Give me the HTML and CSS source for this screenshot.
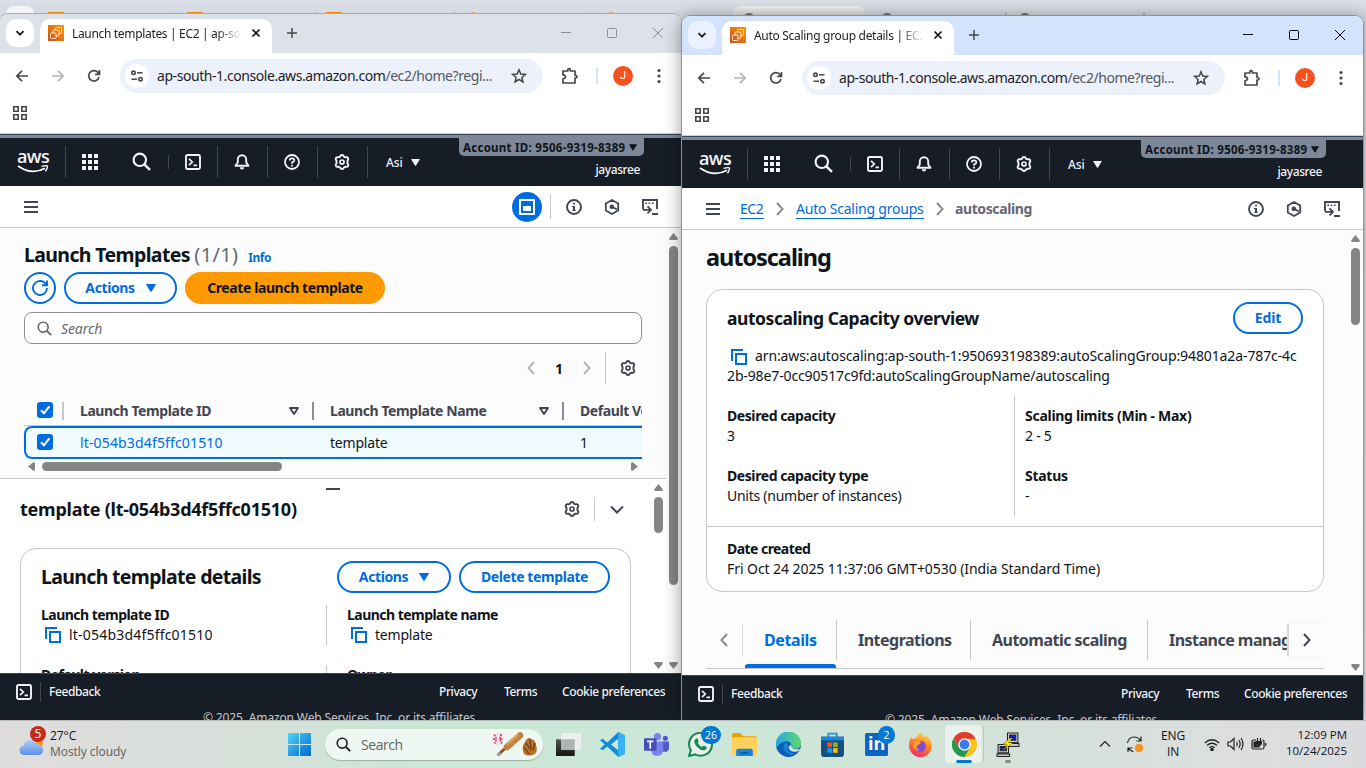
FILE: index.html
```html
<!DOCTYPE html>
<html lang="en">
<head>
<meta charset="utf-8">
<title>Desktop</title>
<link rel="stylesheet" href="styles.css">
</head>
<body>
<svg class="defs" aria-hidden="true">
  <symbol id="down" viewBox="0 0 10 10"><path d="M1.500 3.200 5 6.700 8.500 3.200" fill="none" stroke="currentColor" stroke-width="1.900"/></symbol>
  <symbol id="ec2" viewBox="0 0 16 16"><defs><linearGradient id="og" x1="0" y1="1" x2="1" y2="0"><stop offset="0" stop-color="#c8511b"/><stop offset="1" stop-color="#f90"/></linearGradient></defs><rect width="16" height="16" fill="url(#og)"/><g fill="none" stroke="#fff" stroke-width=".9" opacity=".9"><rect x="2.500" y="8" width="5.500" height="5.500" rx=".8"/><path d="M5 8V5.800q0-.8.8-.8h4.400q.8 0 .8.8v4.400q0 .8-.8.8H8M7.500 5V3.300q0-.8.8-.8h4.400q.8 0 .8.8v4.400q0 .8-.8.8H11"/></g></symbol>
  <symbol id="x" viewBox="0 0 10 10"><path d="m1.500 1.500 7 7m0-7-7 7" fill="none" stroke="currentColor" stroke-width="1.700"/></symbol>
  <symbol id="plus" viewBox="0 0 10 10"><path d="M5 0v10M0 5h10" stroke="currentColor" stroke-width="1.500"/></symbol>
  <symbol id="min" viewBox="0 0 12 12"><path d="M1 5.500h10" stroke="currentColor"/></symbol>
  <symbol id="max" viewBox="0 0 12 12"><rect x="1.500" y="1.500" width="9" height="9" rx="1" fill="none" stroke="currentColor"/></symbol>
  <symbol id="close" viewBox="0 0 12 12"><path d="m1 1 10 10M11 1 1 11" stroke="currentColor"/></symbol>
  <symbol id="back" viewBox="0 0 16 16"><path d="M14 8H3M8 2.800 2.800 8 8 13.200" fill="none" stroke="currentColor" stroke-width="1.700"/></symbol>
  <symbol id="reload" viewBox="0 0 16 16"><path d="M13 9a5.200 5.200 0 1 1-1.300-4.800L13.300 6M13.500 2v4.300H9.200" fill="none" stroke="currentColor" stroke-width="1.700"/></symbol>
  <symbol id="tune" viewBox="0 0 14 14"><g fill="none" stroke="currentColor" stroke-width="1.600"><circle cx="3.500" cy="3.800" r="1.700"/><path d="M7 3.800h5.500M1.500 10.200h5.500"/><circle cx="10.500" cy="10.200" r="1.700"/></g></symbol>
  <symbol id="star" viewBox="0 0 16 16"><path d="m8 1.800 1.750 4.300 4.600.35-3.500 3 1.100 4.500L8 11.500l-3.950 2.450 1.100-4.500-3.500-3 4.600-.35z" fill="none" stroke="currentColor" stroke-width="1.500"/></symbol>
  <symbol id="puzzle" viewBox="0 0 18 18"><path d="M2 4h4.800V3a1.300 1.300 0 0 1 2.600 0v1H14v4.500h1a1.300 1.300 0 0 1 0 2.500h-1v5H2v-4.200q2.500-.4 2.500-2T2 7.900z" fill="none" stroke="currentColor" stroke-width="1.700" stroke-linejoin="round"/></symbol>
  <symbol id="dots" viewBox="0 0 4 16"><circle cx="2" cy="2.500" r="1.600"/><circle cx="2" cy="8" r="1.600"/><circle cx="2" cy="13.500" r="1.600"/></symbol>
  <symbol id="apps" viewBox="0 0 14 14"><g fill="none" stroke="currentColor" stroke-width="1.600"><path d="M.8.800h4.400v4.400H.8zM8.800.800h4.400v4.400H8.800zM.8 8.800h4.400v4.400H.8zM8.800 8.800h4.400v4.400H8.800z"/></g></symbol>
  <symbol id="smile" viewBox="0 0 32 8"><path d="M1 1q14 9.500 27 2.200" fill="none" stroke="#fff" stroke-width="1.800"/><path d="M24.500 1.400q6-1.500 6 0t-2 5" fill="none" stroke="#fff" stroke-width="1.300"/></symbol>
  <symbol id="grid" viewBox="0 0 16 16"><path d="M0 0h4v4H0zM6 0h4v4H6zM12 0h4v4h-4zM0 6h4v4H0zM6 6h4v4H6zM12 6h4v4h-4zM0 12h4v4H0zM6 12h4v4H6zM12 12h4v4h-4z" fill="currentColor"/></symbol>
  <symbol id="search" viewBox="0 0 18 18"><circle cx="7.400" cy="7.400" r="5.900" fill="none" stroke="currentColor" stroke-width="2"/><path d="m11.700 11.700 5.300 5.300" stroke="currentColor" stroke-width="2.300"/></symbol>
  <symbol id="term" viewBox="0 0 16 16"><rect x="1" y="1" width="14" height="14" rx="1.500" fill="none" stroke="currentColor" stroke-width="1.900"/><path d="m4 4.800 3.300 3.200L4 11.200M8.500 11.300H12" fill="none" stroke="currentColor" stroke-width="1.700"/></symbol>
  <symbol id="bell" viewBox="0 0 16 16"><path d="M8 1.200a4.200 4.200 0 0 0-4.200 4.200v3L1.500 11.700h13l-2.300-3.300v-3A4.200 4.200 0 0 0 8 1.200z" fill="none" stroke="currentColor" stroke-width="1.900" stroke-linejoin="round"/><path d="M5.800 13.300q0 2.200 2.200 2.200t2.200-2.200" fill="currentColor"/></symbol>
  <symbol id="help" viewBox="0 0 16 16"><circle cx="8" cy="8" r="7" fill="none" stroke="currentColor" stroke-width="1.800"/><path d="M5.700 6.400q0-2 2.300-2t2.300 1.900Q10.300 8 8 8.300v1.400" fill="none" stroke="currentColor" stroke-width="1.600"/><path d="M7.100 10.700h1.800v1.700H7.100z" fill="currentColor"/></symbol>
  <symbol id="gear" viewBox="0 0 16 16"><path d="M6.100 2.600Q6.500 1 8 1t1.900 1.600q1 .6 1.600.8 1.800-.6 2.600.7.700 1.300-.6 2.500v2.800q1.300 1.200.6 2.500-.8 1.300-2.600.7-.6.400-1.600.9Q9.500 15 8 15t-1.900-1.500q-1-.5-1.600-.9-1.800.6-2.600-.7-.7-1.300.6-2.500V6.600Q1.200 5.400 1.900 4.100q.8-1.300 2.600-.7.600-.2 1.600-.8z" fill="none" stroke="currentColor" stroke-width="1.900" stroke-linejoin="round"/><circle cx="8" cy="8" r="2" fill="none" stroke="currentColor" stroke-width="1.700"/></symbol>
  <symbol id="tri" viewBox="0 0 10 8"><path d="M.5 0h9q.7 0 .3.700L5.600 7.500q-.6.800-1.200 0L.2.700Q-.2 0 .5 0z" fill="currentColor"/></symbol>
  <symbol id="trio" viewBox="0 0 10 8"><path d="M1 1h8L5 7z" fill="none" stroke="currentColor" stroke-width="1.900" stroke-linejoin="round"/></symbol>
  <symbol id="ham" viewBox="0 0 14 12"><path d="M0 1h14M0 6h14M0 11h14" stroke="currentColor" stroke-width="2"/></symbol>
  <symbol id="info" viewBox="0 0 16 16"><circle cx="8" cy="8" r="7" fill="none" stroke="currentColor" stroke-width="1.900"/><path d="M7.100 3.800h1.900v1.800H7.100zM6 7h3v4.200h1V12H6v-.8h1V8H6z" fill="currentColor"/></symbol>
  <symbol id="hex" viewBox="0 0 16 16"><path d="m8 1 6.200 3.500v7L8 15l-6.200-3.500v-7z" fill="none" stroke="currentColor" stroke-width="1.800" stroke-linejoin="round"/><circle cx="7.800" cy="7.800" r="2.300" fill="currentColor"/><path d="m8 7.800 5 2.600" stroke="currentColor" stroke-width="1.700"/></symbol>
  <symbol id="share" viewBox="0 0 16 16"><path d="M1 10V1h14v9" fill="none" stroke="currentColor" stroke-width="1.900"/><path d="M3.300 4.200H5m1.600 0h1.700m1.600 0h1.700" stroke="currentColor" stroke-width="1.600"/><path d="M.8 10.800H8M5.500 7.300 9 10.800l-3.500 3.500M10 15h6" fill="none" stroke="currentColor" stroke-width="1.800"/></symbol>
  <symbol id="refresh" viewBox="0 0 16 16"><path d="M15 8a7 7 0 1 1-2.500-5.400L15 5M15 .5V5.200h-5" fill="none" stroke="currentColor" stroke-width="1.900"/></symbol>
  <symbol id="copy" viewBox="0 0 16 16"><path d="M1 12V1h11M5 5h10v10H5z" fill="none" stroke="currentColor" stroke-width="2"/></symbol>
  <symbol id="left" viewBox="0 0 8 14"><path d="M7 1 1.500 7 7 13" fill="none" stroke="currentColor" stroke-width="2"/></symbol>
  <symbol id="right" viewBox="0 0 8 14"><path d="m1 1 5.500 6L1 13" fill="none" stroke="currentColor" stroke-width="2"/></symbol>
  <symbol id="chev" viewBox="0 0 14 9"><path d="m1 1.500 6 6 6-6" fill="none" stroke="currentColor" stroke-width="2"/></symbol>
</svg>

<main class="desktop">
  <div class="behind">
    <i class="b-pill"></i><i class="b-ico b1"></i><i class="b-sep b2"></i><i class="b-ico b3"></i><i class="b-sep b4"></i><i class="b-ico b5"></i><i class="b-sep b6"></i><i class="b-dot b7"></i><i class="b-sep b8"></i><i class="b-dot b9"></i>
    <i class="b-tab"></i><i class="b-globe g1"></i><i class="b-globe g2"></i><i class="b-globe g3"></i><i class="b-sep g4"></i><i class="b-sep g5"></i>
  </div>

  <section class="window left-win">
    <div class="tabstrip">
      <span class="tabsearch"><svg><use href="#down"/></svg></span>
      <div class="tab"><svg class="fav"><use href="#ec2"/></svg><span class="tabtitle t1">Launch templates | EC2 | ap-sou</span><svg class="tx"><use href="#x"/></svg></div>
      <svg class="newtab"><use href="#plus"/></svg>
      <div class="controls"><svg><use href="#min"/></svg><svg><use href="#max"/></svg><svg><use href="#close"/></svg></div>
    </div>
    <div class="toolbar">
      <svg class="tb"><use href="#back"/></svg><svg class="tb fwd"><use href="#back"/></svg><svg class="tb"><use href="#reload"/></svg>
      <div class="url"><span class="site"><svg><use href="#tune"/></svg></span><span class="addr">ap-south-1.console.aws.amazon.com<em>/ec2/home?regi...</em></span><svg class="star"><use href="#star"/></svg></div>
      <svg class="puz"><use href="#puzzle"/></svg><i class="tsep"></i><span class="avatar">J</span><svg class="dots"><use href="#dots"/></svg>
    </div>
    <div class="bookmarks"><svg><use href="#apps"/></svg></div>
    <div class="band"></div>
    <nav class="aws">
      <div class="logo"><span>aws</span><svg><use href="#smile"/></svg></div>
      <div class="n n-grid"><svg><use href="#grid"/></svg></div>
      <div class="n n-search"><svg class="i18"><use href="#search"/></svg></div>
      <div class="n n-term"><svg><use href="#term"/></svg></div>
      <div class="n"><svg><use href="#bell"/></svg></div>
      <div class="n"><svg><use href="#help"/></svg></div>
      <div class="n"><svg><use href="#gear"/></svg></div>
      <div class="region"><span>Asi</span><svg><use href="#tri"/></svg></div>
      <div class="account"><div class="acct"><span>Account ID: 9506-9319-8389</span><svg><use href="#tri"/></svg></div><span class="user">jayasree</span></div>
    </nav>
    <div class="crumbs">
      <svg class="ham"><use href="#ham"/></svg>
      <div class="tools"><span class="panelbtn"><i></i></span><i class="csep"></i><svg><use href="#info"/></svg><svg><use href="#hex"/></svg><svg><use href="#share"/></svg></div>
    </div>
    <div class="body">
      <div class="col">
        <div class="list">
          <h1 class="lt">Launch Templates <span>(1/1)</span><a>Info</a></h1>
          <div class="actions"><button class="btn round"><svg><use href="#refresh"/></svg></button><button class="btn act">Actions<svg><use href="#tri"/></svg></button><button class="btn primary">Create launch template</button></div>
          <div class="find"><svg><use href="#search"/></svg><span>Search</span></div>
          <div class="pager"><svg><use href="#left"/></svg><b>1</b><svg><use href="#right"/></svg><i></i><svg class="pg"><use href="#gear"/></svg></div>
          <div class="table">
            <div class="tr th"><div class="c0"><i class="cb"><svg viewBox="0 0 16 16"><path d="m4 8.300 3 3 5.300-7"/></svg></i></div><div class="c1">Launch Template ID<svg><use href="#trio"/></svg></div><div class="c1">Launch Template Name<svg><use href="#trio"/></svg></div><div class="c3">Default Version</div></div>
            <div class="tr sel"><div class="c0"><i class="cb"><svg viewBox="0 0 16 16"><path d="m4 8.300 3 3 5.300-7"/></svg></i></div><div class="c1 link">lt-054b3d4f5ffc01510</div><div class="c1">template</div><div class="c3">1</div></div>
          </div>
          <div class="hbar"><i class="al"></i><i class="thumb"></i><i class="ar"></i></div>
        </div>
        <div class="split">
          <div class="splitmain">
            <i class="handle"></i>
            <div class="sphead"><h2>template (lt-054b3d4f5ffc01510)</h2><svg class="g"><use href="#gear"/></svg><i></i><svg class="ch"><use href="#chev"/></svg></div>
            <div class="card detail">
              <div class="cardhead"><h2>Launch template details</h2><button class="btn act">Actions<svg><use href="#tri"/></svg></button><button class="btn del">Delete template</button></div>
              <div class="kv"><div><b>Launch template ID</b><span class="cp id"><svg><use href="#copy"/></svg>lt-054b3d4f5ffc01510</span></div><div><b>Launch template name</b><span class="cp"><svg><use href="#copy"/></svg>template</span></div></div>
              <div class="kv"><div><b>Default version</b><span>1</span></div><div><b>Owner</b><span>-</span></div></div>
            </div>
          </div>
          <div class="vbar"><i class="au"></i><i class="thumb s"></i><i class="ad"></i></div>
        </div>
      </div>
      <div class="vbar"><i class="au"></i><i class="thumb l"></i><i class="ad"></i></div>
    </div>
    <footer><div class="frow"><svg><use href="#term"/></svg><i></i><span class="fb">Feedback</span><span class="pr">Privacy</span><span class="te">Terms</span><span class="co">Cookie preferences</span></div><p>© 2025, Amazon Web Services, Inc. or its affiliates.</p></footer>
  </section>

  <section class="window right-win">
    <div class="tabstrip">
      <span class="tabsearch"><svg><use href="#down"/></svg></span>
      <div class="tab"><svg class="fav"><use href="#ec2"/></svg><span class="tabtitle t2">Auto Scaling group details | EC2</span><svg class="tx"><use href="#x"/></svg></div>
      <svg class="newtab"><use href="#plus"/></svg>
      <div class="controls"><svg><use href="#min"/></svg><svg><use href="#max"/></svg><svg><use href="#close"/></svg></div>
    </div>
    <div class="toolbar">
      <svg class="tb"><use href="#back"/></svg><svg class="tb fwd"><use href="#back"/></svg><svg class="tb"><use href="#reload"/></svg>
      <div class="url"><span class="site"><svg><use href="#tune"/></svg></span><span class="addr">ap-south-1.console.aws.amazon.com<em>/ec2/home?regi...</em></span><svg class="star"><use href="#star"/></svg></div>
      <svg class="puz"><use href="#puzzle"/></svg><i class="tsep"></i><span class="avatar">J</span><svg class="dots"><use href="#dots"/></svg>
    </div>
    <div class="bookmarks"><svg><use href="#apps"/></svg></div>
    <div class="band"></div>
    <nav class="aws">
      <div class="logo"><span>aws</span><svg><use href="#smile"/></svg></div>
      <div class="n n-grid"><svg><use href="#grid"/></svg></div>
      <div class="n n-search"><svg class="i18"><use href="#search"/></svg></div>
      <div class="n n-term"><svg><use href="#term"/></svg></div>
      <div class="n"><svg><use href="#bell"/></svg></div>
      <div class="n"><svg><use href="#help"/></svg></div>
      <div class="n"><svg><use href="#gear"/></svg></div>
      <div class="region"><span>Asi</span><svg><use href="#tri"/></svg></div>
      <div class="account"><div class="acct"><span>Account ID: 9506-9319-8389</span><svg><use href="#tri"/></svg></div><span class="user">jayasree</span></div>
    </nav>
    <div class="crumbs">
      <svg class="ham"><use href="#ham"/></svg>
      <a class="ec">EC2</a><svg class="cr"><use href="#right"/></svg><a class="asg">Auto Scaling groups</a><svg class="cr"><use href="#right"/></svg><b>autoscaling</b>
      <div class="tools"><svg><use href="#info"/></svg><svg><use href="#hex"/></svg><svg><use href="#share"/></svg></div>
    </div>
    <div class="body">
      <div class="page">
        <h1 class="as">autoscaling</h1>
        <div class="card cap">
          <div class="caphead"><h2>autoscaling Capacity overview</h2><button class="btn edit">Edit</button></div>
          <p class="arn"><svg><use href="#copy"/></svg>arn:aws:autoscaling:ap-south-1:950693198389:autoScalingGroup:94801a2a-787c-4c<br><span>2b-98e7-0cc90517c9fd:autoScalingGroupName/autoscaling</span></p>
          <div class="facts">
            <div><b>Desired capacity</b><span>3</span><b>Desired capacity type</b><span>Units (number of instances)</span></div>
            <div><b>Scaling limits (Min - Max)</b><span>2 - 5</span><b>Status</b><span>-</span></div>
          </div>
          <div class="date"><b>Date created</b><span>Fri Oct 24 2025 11:37:06 GMT+0530 (India Standard Time)</span></div>
        </div>
        <div class="tabs">
          <span class="tl"><svg><use href="#left"/></svg></span>
          <span class="pt on">Details</span><span class="pt p2">Integrations</span><span class="pt p3">Automatic scaling</span><span class="pt p4">Instance management</span>
          <span class="tr-end"><svg><use href="#right"/></svg></span>
        </div>
      </div>
      <div class="vbar"><i class="au"></i><i class="thumb m"></i><i class="ad"></i></div>
    </div>
    <footer><div class="frow"><svg><use href="#term"/></svg><i></i><span class="fb">Feedback</span><span class="pr">Privacy</span><span class="te">Terms</span><span class="co">Cookie preferences</span></div><p>© 2025, Amazon Web Services, Inc. or its affiliates.</p></footer>
  </section>

  <div class="taskbar">
    <div class="weather">
      <svg class="cloud" viewBox="0 0 30 30"><defs><linearGradient id="cl" x1="0" y1="0" x2="0" y2="1"><stop offset="0" stop-color="#b4cff8"/><stop offset="1" stop-color="#5d8fe8"/></linearGradient></defs><circle cx="19" cy="16" r="6" fill="#f39a1c"/><path d="M6 28a4.800 4.800 0 0 1-.5-9.500Q7 13 12.500 13q5 0 6.500 4.500 6 0 6 5.500 0 5-5 5z" fill="url(#cl)"/></svg>
      <span class="wbadge">5</span>
      <p><span>27°C</span><em>Mostly cloudy</em></p>
    </div>
    <div class="apps">
      <div class="app win"><svg viewBox="0 0 24 24"><defs><linearGradient id="wg" x1="0" y1="0" x2="1" y2="1"><stop offset="0" stop-color="#4fd2fb"/><stop offset="1" stop-color="#0068cc"/></linearGradient></defs><path d="M1 1h10.500v10.500H1zM12.500 1H23v10.500H12.500zM1 12.500h10.500V23H1zM12.500 12.500H23V23H12.500z" fill="url(#wg)"/></svg></div>
      <div class="tsearch"><svg class="mag"><use href="#search"/></svg><span>Search</span>
        <svg class="bat" viewBox="0 0 50 28"><circle cx="8" cy="9" r="6.200" fill="#efe3f0"/><path d="M4 4.500q4 4 .5 9M11.500 4q-3 5 .5 9.500M3 9h3m4 0h3" fill="none" stroke="#c9404a" stroke-width="1.500" stroke-dasharray="2 .8"/><path d="m9 24 20-18" stroke="#8b5524" stroke-width="3" stroke-linecap="round"/><path d="m17 17 13-11.500" stroke="#c08342" stroke-width="6.500" stroke-linecap="round"/><path d="m17 14.500 11-10" stroke="#dba661" stroke-width="2"/><path d="m7.500 25.500 3-2.500" stroke="#9aa0a5" stroke-width="3.500"/><path d="M34 24q-3-7 1-12 3-6 6-3 4 0 5 6 2 6-1 9-6 3-11 0z" fill="#b4702a"/><path d="m36 13 5 7m-7-3 5 7m1-15 1 9m4-5-2 7" stroke="#6b3c12" stroke-width="1.200"/></svg></div>
      <div class="app"><svg viewBox="0 0 24 24"><defs><linearGradient id="tv" x1="0" y1="0" x2="0" y2="1"><stop offset="0" stop-color="#555"/><stop offset="1" stop-color="#111"/></linearGradient></defs><path d="M0 7h18v16H0z" fill="url(#tv)"/><path d="M5 1h19v16H5z" fill="#eceef0"/><path d="M5 7h13v10H5z" fill="#aeb3b3"/></svg></div>
      <div class="app"><svg viewBox="0 0 24 24"><path d="M17.500 0 24 3v18l-6.500 3L7 14l-4.500 3.500L0 16l4.500-4L0 8l2.500-1.500L7 10z" fill="#138bd8"/><path d="M17.500 6.500 10.500 12l7 5.500z" fill="#cfe6d8"/><path d="M17.500 0 24 3v18l-6.500 3z" fill="#38b2f4"/></svg></div>
      <div class="app"><svg viewBox="0 0 24 24"><circle cx="13" cy="4.500" r="3.500" fill="#7b83eb"/><circle cx="20.500" cy="6" r="2.500" fill="#5059c9"/><path d="M17 9h7v6q0 4-4 4t-4-4z" fill="#5059c9"/><path d="M7 9h11.500v8q-.5 6-6 6T7 17z" fill="#7b83eb"/><rect y="6" width="12" height="12" rx="1" fill="#4650b8"/><path d="M3 9h6M6 9v7" stroke="#fff" stroke-width="1.500"/></svg></div>
      <div class="app"><svg viewBox="0 0 24 24"><path d="M1 23 2.700 17.500A11 11 0 1 1 7 21.500z" fill="#e5f1e9" stroke="#198754" stroke-width="2"/><path d="M7.500 6.500q1.500-1 2 .5l.8 2-.9 1.500q1.500 3 4.400 4l1.300-1.500 2.700 1.300q.6 2.500-2.500 3.200-3 .3-6.500-3.200-3.700-4-2.500-6.500z" fill="#198754"/></svg><b class="num">26</b></div>
      <div class="app"><svg viewBox="0 0 24 24"><path d="M0 3q0-2 2-2h6l2.500 3H22q2 0 2 2v16H0z" fill="#e6a200"/><rect y="5" width="24" height="18" rx="1.500" fill="#ffd05a"/><path d="M4 23v-5q0-2 2-2h12q2 0 2 2v5z" fill="#1784d8"/><path d="M8 20h8" stroke="#095da6" stroke-width="1.500"/></svg></div>
      <div class="app"><svg viewBox="0 0 24 24"><defs><linearGradient id="eg" x1="0" y1="0" x2="1" y2="0"><stop offset="0" stop-color="#24a5ed"/><stop offset="1" stop-color="#61db66"/></linearGradient></defs><circle cx="12" cy="12" r="12" fill="#0d5cb5"/><path d="M0 12A12 12 0 0 1 24 11q0 5-5.500 5-5 0-3.500-3-1-5-6.500-4T0 16z" fill="url(#eg)"/><path d="M9 10q-4 5 1 10 5 4 10 0-6 1.500-8-2-2-3 0-6z" fill="#1581dd"/><path d="M14.500 12q0 6 9 4-2 3-4 3-7 .5-7.500-4.500z" fill="#cfe6d8"/></svg></div>
      <div class="app"><svg viewBox="0 0 24 24"><path d="M8 5V1.500h8V5" fill="none" stroke="#2396dc" stroke-width="1.800"/><path d="M1 4.500h22V21q0 3-3 3H4q-3 0-3-3z" fill="#184d82"/><path d="M1 4.500h22V8H1z" fill="#1988d6"/><path d="M7 10h4.500v4.500H7z" fill="#f25022"/><path d="M12.500 10H17v4.500h-4.500z" fill="#7fba00"/><path d="M7 15.500h4.500V20H7z" fill="#00a4ef"/><path d="M12.500 15.500H17V20h-4.500z" fill="#ffb900"/></svg></div>
      <div class="app"><svg viewBox="0 0 24 24"><rect x="1" y="1" width="22" height="22" rx="1.500" fill="#0a66c2"/></svg><span class="li">in</span><b class="num two">2</b></div>
      <div class="app"><svg viewBox="0 0 24 24"><defs><linearGradient id="fg" x1=".7" y1="0" x2=".3" y2="1"><stop offset="0" stop-color="#ffdd3c"/><stop offset=".45" stop-color="#ff8a25"/><stop offset="1" stop-color="#ed2867"/></linearGradient></defs><path d="M3 4.500 4.500 7 8 5.500Q10 2 12.500 0q.5 3 3.500 5l1-2q5.500 4 6 10a11 11 0 0 1-22 0Q1 8 3 4.500z" fill="url(#fg)"/><circle cx="12" cy="13.500" r="5.200" fill="#7d4bd4"/><path d="M6 10q4-3 7 0l-4 3q-2 3 2 4-5 1-6-3z" fill="#ff9b2f"/></svg></div>
      <div class="app active"><svg viewBox="0 0 24 24"><circle cx="12" cy="12" r="12" fill="#fbc116"/><path d="M1.600 6A12 12 0 0 1 22.400 6H12l-5.200 9z" fill="#e33b2e"/><path d="M1.600 6A12 12 0 0 0 12 24l5.200-9H6.800z" fill="#249b50"/><path d="M12 6h10.400" stroke="#e33b2e" stroke-width="1"/><circle cx="12" cy="12" r="6" fill="#fff"/><circle cx="12" cy="12" r="4.700" fill="#3b7ded"/></svg><i></i></div>
      <div class="app run"><svg viewBox="0 0 24 24"><g stroke="#222"><path d="M11 1h10v9H11z" fill="#d7d7d7"/><path d="M13 3h6v5h-6z" fill="#1218d8"/><path d="M8 11h14v3H10z" fill="#ccc"/><path d="M2 12h10v8H2z" fill="#d7d7d7"/><path d="M4 14h6v4H4z" fill="#1218d8"/><path d="M1 21h12v2.500H1z" fill="#ccc"/></g><path d="m13 6-6 6 4 .5-4 5 9-7-4-.5 4-4z" fill="#ffef00" stroke="#665c00" stroke-width=".5"/></svg><i></i></div>
    </div>
    <div class="tray">
      <svg class="up" viewBox="0 0 12 8"><path d="m1 6.500 5-5 5 5"/></svg>
      <svg class="upd" viewBox="0 0 18 18"><path d="M1.500 8Q2.500 2 8 2q4 0 6.500 3.500M15 1.500v4.500h-4.500M6.500 13H2v4M2.500 13q2 3.500 5 3.500" /><circle cx="13" cy="13" r="4.200" class="orange"/></svg>
      <p class="lang"><span>ENG</span><span>IN</span></p>
      <svg class="wifi" viewBox="0 0 16 13"><path d="M.8 5q7.200-6.500 14.400 0M3 7.500q5-4.500 10 0M5.300 9.800q2.700-2.300 5.400 0"/><circle cx="8" cy="11.500" r="1.200" class="blk"/></svg>
      <svg class="vol" viewBox="0 0 17 14"><path d="M1 5h2.500L7 1.500v11L3.500 9H1zM9.500 5q1.500 2 0 4M11.700 3q3 4 0 8M14 1q4 6 0 12"/></svg>
      <svg class="batt" viewBox="0 0 16 14"><path d="M5 3H2.500Q1 3 1 4.500v6Q1 12 2.500 12h9q1.500 0 1.500-1.500v-6Q13 3 11.500 3M14.700 6v3"/><path d="M3 5h2v3q1 2 3.500 2H3z" class="blk"/><path d="M8 9v1.500M6.500 1v3.500M9.500 1v3.500M5.500 4.500h5q0 4-2.500 4t-2.500-4z" class="blk2"/></svg>
      <p class="clock"><span>12:09 PM</span><span>10/24/2025</span></p>
    </div>
  </div>
</main>
</body>
</html>
```
FILE: styles.css
```css
* { box-sizing: border-box; }
body { margin: 0; font-family: "Noto Sans", "Open Sans", sans-serif; font-size: 14px; color: #0f141a; }
svg { display: block; flex: none; }
p, h1, h2 { margin: 0; }
i, em { font-style: normal; }
.defs { position: absolute; width: 0; height: 0; }
.desktop { position: relative; width: 1366px; height: 768px; overflow: hidden; background: linear-gradient(#dce0e8, #d5d9e0 14px, #e4e4e4 40px, #f1f1f1); }

.behind i { position: absolute; display: block; }
.b-pill { left: 6px; top: 6px; width: 28px; height: 12px; border-radius: 8px 8px 0 0; background: #f4f5f7; }
.b-ico { top: 12px; width: 16px; height: 3px; background: #ec8b12; }
.b-sep { top: 12px; width: 2px; height: 3px; background: #b7bac2; }
.b-dot { top: 12px; width: 6px; height: 3px; border-radius: 3px 3px 0 0; background: #ec9a35; }
.b1 { left: 48px; } .b2 { left: 175px; } .b3 { left: 187px; } .b4 { left: 314px; } .b5 { left: 326px; }
.b6 { left: 453px; } .b7 { left: 470px; } .b8 { left: 591px; } .b9 { left: 608px; }
.b-tab { left: 733px; top: 6px; width: 132px; height: 12px; border-radius: 8px 8px 0 0; background: linear-gradient(#f0f1f2, #d8d8d8); }
.b-globe { top: 13px; width: 12px; height: 8px; border-radius: 6px 6px 0 0; border: 2px solid #6c6f73; }
.g1 { left: 743px; } .g2 { left: 881px; } .g3 { left: 1019px; } .g4 { left: 1005px; } .g5 { left: 1143px; }

.window { position: absolute; width: 681px; height: 706px; background: #fff; display: flex; flex-direction: column; border-radius: 8px 8px 0 0; }
.left-win { left: 0; top: 14px; box-shadow: 0 -1px 0 #a9abaf; }
.right-win { left: 682px; top: 16px; height: 704px; box-shadow: 0 0 0 1px #8f9194, 0 2px 18px rgba(0,0,0,.42); }
.tabstrip { height: 39px; flex: none; display: flex; background: #dde1e9; border-radius: 8px 8px 0 0; padding: 5px 17px 0 6px; }
.right-win .tabstrip { background: #d3e3fd; }
.tabsearch { width: 28px; height: 28px; border-radius: 10px; background: #fff; display: grid; place-items: center; margin-right: 6px; }
.right-win .tabsearch { background: #ebf2fe; }
.tabsearch svg { width: 10px; height: 10px; color: #1f1f1f; }
.tab { width: 232px; height: 34px; border-radius: 10px 10px 0 0; background: #fff; display: flex; align-items: flex-start; padding: 6px 0 0 8px; }
.fav { width: 16px; height: 16px; }
.tabtitle { width: 169px; margin-left: 8px; line-height: 18px; font-size: 12px; white-space: nowrap; overflow: hidden; color: #1f1f1f; -webkit-mask-image: linear-gradient(90deg, #000 145px, transparent 169px); mask-image: linear-gradient(90deg, #000 145px, transparent 169px); }
.t1 { letter-spacing: -.33px; }
.t2 { letter-spacing: -.3px; }
.tx { width: 10px; height: 10px; margin: 3px 0 0 10px; }
.newtab { width: 10px; height: 10px; margin: 9px 0 0 15px; color: #474747; }
.controls { margin: 8px 0 0 auto; display: flex; gap: 34px; color: #8b8d92; }
.controls svg { width: 12px; height: 12px; }
.right-win .controls { color: #000; }
.toolbar { height: 46px; flex: none; display: flex; align-items: center; padding-left: 14px; color: #474747; background: #fff; }
.tb { width: 16px; height: 16px; margin-right: 20px; }
.fwd { transform: scaleX(-1); color: #b4b4b4; }
.url { width: 423px; height: 34px; margin-left: -2px; border-radius: 17px; background: #ecf1fb; display: flex; align-items: center; padding-left: 5px; }
.site { width: 24px; height: 24px; border-radius: 50%; background: #fff; display: grid; place-items: center; }
.site svg { width: 14px; height: 14px; }
.addr { width: 346px; margin-left: 8px; font-size: 14px; letter-spacing: -.44px; white-space: nowrap; color: #1f1f1f; line-height: 20px; }
.addr em { color: #55595f; }
.star { width: 16px; height: 16px; margin-left: 8px; }
.puz { width: 18px; height: 18px; margin-left: 18px; }
.tsep { width: 2px; height: 16px; background: #d3e3fd; margin: 0 15px 0 17px; }
.avatar { width: 20px; height: 20px; border-radius: 50%; background: #f4511e; color: #fff; font: 11px/20px Roboto, sans-serif; text-align: center; }
.dots { width: 4px; height: 16px; margin-left: 24px; fill: #474747; }
.bookmarks { height: 35px; flex: none; padding: 7px 13px; border-bottom: 1px solid #cdd0d6; color: #474747; }
.bookmarks svg { width: 14px; height: 14px; }
.band { height: 4px; flex: none; border-top: 1px solid #3b4656; background: #7c8797; }

.aws { height: 48px; flex: none; display: flex; align-items: center; background: #161d26; color: #f3f3f7; }
.logo { width: 66px; height: 32px; border-right: 1px solid #424650; padding: 2px 0 0 17px; }
.logo span { display: block; font: 600 18px/16px "Open Sans", sans-serif; letter-spacing: -.6px; height: 17px; }
.logo svg { width: 32px; height: 8px; margin-top: 0; }
.n { width: 50px; height: 32px; border-right: 1px solid #424650; padding-right: 1px; display: grid; place-items: center; flex: none; }
.n svg { width: 16px; height: 16px; }
.n-grid { width: 48px; border: 0; padding: 0; }
.n-search { width: 55px; height: 14px; padding: 0; }
.n svg.i18 { width: 19px; height: 19px; margin: -3px 0 -2px 1px; }
.n-term { width: 49px; padding: 0; }
.region { display: flex; align-items: center; padding-left: 18px; width: 91px; font-size: 12px; letter-spacing: -.1px; font-weight: 500; }
.region svg { width: 9px; height: 7px; margin-left: 8px; }
.account { height: 48px; width: 185px; display: flex; flex-direction: column; align-items: flex-end; }
.acct { height: 18px; width: 185px; background: #7c8797; border-radius: 0 0 5px 5px; color: #0f141a; display: flex; align-items: center; padding: 0 0 0 4px; font-size: 11.500px; font-weight: 700; white-space: nowrap; }
.acct span { letter-spacing: .27px; }
.acct svg { width: 8px; height: 7px; margin-left: 4px; }
.user { font-size: 12px; font-weight: 500; line-height: 16px; margin: 6px 4px 0 0; letter-spacing: -.4px; }

.crumbs { height: 42px; flex: none; display: flex; align-items: center; border-bottom: 1px solid #c6c6cd; background: #fff; padding-left: 24px; color: #424650; white-space: nowrap; }
.ham { width: 14px; height: 12px; }
.tools { margin-left: auto; display: flex; align-items: center; gap: 22px; padding-right: 23px; }
.tools svg { width: 16px; height: 16px; }
.panelbtn { width: 30px; height: 30px; border-radius: 50%; background: #006ce0; display: grid; place-items: center; margin-right: -14px; }
.panelbtn i { width: 16px; height: 16px; border: 2px solid #fff; display: grid; place-items: end center; padding-bottom: 2px; }
.panelbtn i::after { content: ""; width: 8px; height: 5px; background: #fff; }
.csep { width: 1px; height: 25px; background: #c6c6cd; margin-right: -7px; }
.crumbs a { color: #006ce0; line-height: 18px; border-bottom: 1px solid #006ce0; margin-left: 20px; padding-top: 1px; }
.crumbs a.ec { width: 24px; letter-spacing: -.5px; }
.crumbs a.asg { width: 128px; margin-left: 12px; letter-spacing: -.22px; }
.cr { width: 8px; height: 14px; margin-left: 12px; color: #8c8c94; }
.crumbs b { margin-left: 11px; color: #656871; letter-spacing: -.4px; }

.body { height: 445px; flex: none; display: flex; overflow: hidden; background: #fcfcfd; }
.col { width: 666px; }
.vbar { width: 15px; height: 100%; display: flex; flex-direction: column; align-items: center; padding: 5px 0 4px; }
.au, .ad { width: 9px; height: 7px; background: #858585; clip-path: polygon(50% 0, 100% 80%, 90% 100%, 10% 100%, 0 80%); }
.ad { margin-top: auto; transform: scaleY(-1); }
.thumb { display: block; background: #858585; border-radius: 5px; }
.thumb.l { width: 9px; height: 339px; margin-top: 6px; }
.thumb.s { width: 9px; height: 36px; margin-top: 6px; }
.thumb.m { width: 9px; height: 77px; margin-top: 6px; }
.list { height: 251px; border-bottom: 1px solid #c6c6cd; padding: 15px 24px 0; }
.lt { font-size: 19.500px; line-height: 24px; height: 24px; letter-spacing: -.63px; white-space: nowrap; }
.lt span { font-size: 20px; font-weight: 400; color: #656871; letter-spacing: .3px; }
.lt a { font-size: 12px; color: #006ce0; margin-left: 10px; letter-spacing: -.4px; }
.actions { display: flex; gap: 8px; margin-top: 5px; }
.btn { height: 32px; border: 2px solid #006ce0; border-radius: 16px; background: #fff; color: #006ce0; font: 700 14px/20px "Noto Sans", sans-serif; letter-spacing: -.4px; padding: 0; display: flex; align-items: center; justify-content: center; white-space: nowrap; }
.round { width: 32px; }
.round svg { width: 16px; height: 16px; }
.act { width: 113px; }
.act svg { width: 10px; height: 8px; margin-left: 11px; }
.primary { width: 200px; background: #f90; border-color: #f90; color: #0f141a; }
.find { height: 32px; margin-top: 8px; border: 1px solid #8c8c94; border-radius: 8px; background: #fff; display: flex; align-items: center; padding-left: 12px; color: #656871; font-style: italic; }
.find svg { width: 15px; height: 15px; }
.find span { margin-left: 9px; letter-spacing: -.1px; }
.pager { height: 32px; margin-top: 8px; display: flex; justify-content: flex-end; align-items: center; padding-right: 6px; color: #b4b4bb; }
.pager svg { width: 8px; height: 14px; }
.pager b { color: #0f141a; width: 48px; text-align: center; }
.pager i { width: 1px; height: 32px; background: #c6c6cd; margin: 0 14px; }
.pager svg.pg { width: 16px; height: 16px; color: #424650; }
.table { margin-top: 12px; overflow: hidden; }
.tr { display: flex; align-items: center; white-space: nowrap; letter-spacing: -.2px; }
.th { height: 30px; font-weight: 700; color: #424650; border-bottom: 1px solid #c6c6cd; letter-spacing: -.42px; }
.c0 { width: 40px; height: 18px; padding-left: 13px; flex: none; }
.th .c0 { border-right: 2px solid #c6c6cd; }
.c1 { width: 250px; padding-left: 16px; flex: none; display: flex; align-items: center; }
.th .c1 { border-right: 2px solid #8c8c94; height: 18px; }
.th .c1 svg { width: 10px; height: 8px; margin: 0 13px 0 auto; }
.c3 { padding-left: 16px; }
.cb { display: block; width: 16px; height: 16px; border-radius: 3px; background: #006ce0; }
.cb svg { fill: none; stroke: #fff; stroke-width: 2; }
.sel { height: 33px; border: 2px solid #006ce0; border-right: 0; border-radius: 8px 0 0 8px; background: #f0fbff; padding-bottom: 1px; }
.sel .c0 { padding-left: 11px; width: 38px; height: 16px; }
.link { color: #006ce0; letter-spacing: .15px; }
.hbar { display: flex; align-items: center; margin-top: 3px; height: 9px; padding: 0 4px; }
.al, .ar { width: 7px; height: 9px; background: #858585; clip-path: polygon(0 50%, 80% 0, 100% 10%, 100% 90%, 80% 100%); }
.ar { transform: scaleX(-1); margin-left: auto; }
.hbar .thumb { width: 240px; height: 9px; margin-left: 7px; }
.split { height: 194px; display: flex; background: #fff; overflow: hidden; }
.splitmain { width: 651px; padding: 9px 20px 0; display: flex; flex-direction: column; height: 194px; }
.handle { width: 14px; height: 2px; flex: none; background: #424650; align-self: center; margin-left: 15px; }
.sphead { height: 24px; flex: none; margin-top: 7px; display: flex; align-items: center; color: #424650; }
.sphead h2 { font-size: 18px; color: #0f141a; letter-spacing: -.24px; flex: 1; white-space: nowrap; padding-bottom: 1px; }
.sphead .g { width: 16px; height: 16px; }
.sphead i { width: 1px; height: 24px; background: #c6c6cd; margin: 0 15px 0 14px; }
.sphead .ch { width: 14px; height: 9px; margin-right: 7px; }
.card { border: 1px solid #c6c6cd; border-radius: 16px; background: #fff; flex: none; }
.detail { margin-top: 27px; width: 611px; height: 200px; padding: 12px 20px; }
.cardhead { display: flex; align-items: center; gap: 8px; }
.cardhead h2 { font-size: 19.500px; line-height: 24px; letter-spacing: -.67px; flex: 1; white-space: nowrap; padding-bottom: 1px; }
.cardhead .act { width: 114px; }
.del { width: 151px; }
.kv { display: flex; margin-top: 12px; height: 40px; line-height: 20px; }
.kv + .kv { margin-top: 20px; }
.kv div { width: 286px; flex: none; border-right: 1px solid #c6c6cd; letter-spacing: -.2px; }
.kv div + div { width: 283px; border: 0; padding-left: 20px; }
.kv b { display: block; letter-spacing: -.53px; }
.cp { display: flex; align-items: center; }
.id { letter-spacing: .2px; }
.cp svg, .arn svg { width: 16px; height: 16px; color: #006ce0; margin: 0 8px 0 4px; }
footer { flex: 1; min-height: 0; background: #161d26; border-top: 1px solid #424650; color: #f3f3f7; font-size: 12px; overflow: hidden; }
.right-win footer { flex: none; height: 45px; }
.frow { height: 35px; display: flex; align-items: center; padding-left: 16px; font-weight: 500; letter-spacing: -.4px; white-space: nowrap; }
.frow svg { width: 16px; height: 16px; }
.frow i { width: 1px; height: 20px; background: #424650; margin: 0 8px; }
.frow span { padding-bottom: 1px; }
.fb { width: 390px; } .pr { width: 65px; } .te { width: 58px; }
footer p { padding-left: 203px; line-height: 18px; letter-spacing: -.14px; color: #c6c6cd; }

.page { width: 666px; padding: 12px 24px 0; }
.as { font-size: 23.500px; line-height: 30px; letter-spacing: -1.05px; }
.cap { width: 618px; height: 303px; margin-top: 17px; }
.caphead { display: flex; justify-content: space-between; align-items: center; padding: 12px 20px 0; }
.caphead h2 { font-size: 17.500px; letter-spacing: -.45px; padding-bottom: 1px; }
.edit { width: 70px; letter-spacing: -.1px; }
.arn { line-height: 20px; margin: 12px 20px 0; white-space: nowrap; letter-spacing: -.105px; }
.arn span { letter-spacing: -.13px; }
.arn svg { display: inline-block; vertical-align: -4px; }
.facts { display: flex; margin: 10px 20px 0; height: 120px; line-height: 20px; }
.facts div { width: 288px; border-right: 1px solid #c6c6cd; padding-top: 10px; letter-spacing: -.26px; }
.facts div + div { border: 0; padding-left: 10px; }
.facts b, .facts span, .date b, .date span { display: block; }
.facts b { letter-spacing: -.42px; }
.facts div + div b { letter-spacing: -.28px; }
.facts b:nth-of-type(2) { margin-top: 20px; }
.date { margin-top: 10px; border-top: 1px solid #c6c6cd; padding: 12px 20px; line-height: 20px; letter-spacing: -.07px; }
.date b { letter-spacing: -.55px; }
.tabs { width: 618px; height: 49px; margin-top: 28px; border-bottom: 1px solid #c6c6cd; display: flex; font-size: 16px; font-weight: 700; color: #424650; letter-spacing: -.52px; }
.tl { width: 37px; height: 32px; margin-top: 4px; border-right: 1px solid #dedee3; padding: 9px 0 0 14px; color: #8c8c94; flex: none; }
.tabs svg { width: 8px; height: 14px; }
.pt { height: 40px; border-right: 1px solid #c6c6cd; line-height: 40px; padding-left: 21px; flex: none; white-space: nowrap; }
.on { width: 94px; color: #006ce0; position: relative; letter-spacing: -.4px; }
.on::after { content: ""; position: absolute; left: 2px; right: 0; top: 44px; height: 4px; border-radius: 3px 3px 0 0; background: #006ce0; }
.p2 { width: 134px; } .p3 { width: 177px; } .p4 { width: 141px; border: 0; overflow: hidden; }
.tr-end { width: 35px; height: 32px; margin-top: 4px; background: #fcfcfd; box-shadow: -2px 0 1px #d8d8dc; padding: 9px 0 0 14px; position: relative; }

.taskbar { position: absolute; left: 0; top: 720px; width: 1366px; height: 48px; border-top: 1px solid #b6bbb9; background: linear-gradient(90deg, #dfdddc 0, #d8dfda 220px, #cbe7d6 420px, #cbe7d8 700px, #d3e2d9 980px, #dcdede 1250px, #dbdbdf); display: flex; font-family: "Open Sans", sans-serif; font-size: 12px; }
.weather { width: 277px; display: flex; position: relative; padding: 6px 0 0 18px; }
.cloud { width: 30px; height: 30px; }
.wbadge { position: absolute; left: 30px; top: 5px; width: 16px; height: 16px; border-radius: 50%; background: #c42b1c; color: #fff; line-height: 16px; text-align: center; }
.weather p { margin: 1px 0 0 2px; line-height: 16px; white-space: nowrap; letter-spacing: -.05px; }
.weather span, .weather em { display: block; }
.weather em { color: #5c605e; }
.apps { display: flex; align-items: center; height: 46px; }
.app { width: 44px; height: 46px; display: grid; place-items: center; position: relative; }
.app svg { width: 25px; height: 25px; }
.tsearch { width: 218px; height: 31px; border-radius: 16px; background: #eff7f2; box-shadow: 0 1px 1px #9fb0a7; margin: 0 3px 0 4px; display: flex; align-items: center; padding-left: 11px; }
.mag { width: 15px; height: 15px; color: #222; }
.tsearch span { font-size: 14px; color: #5f6562; margin-left: 10px; width: 129px; letter-spacing: -.45px; }
.bat { width: 50px; height: 28px; }
.num { position: absolute; left: 23px; top: 5px; width: 20px; height: 18px; border-radius: 9px; background: #0078d4; color: #fff; font-size: 10.500px; font-weight: 400; line-height: 18px; text-align: center; }
.num.two { left: 24px; width: 17px; }
.li { position: absolute; left: 14px; top: 13px; font: 700 18px/18px "Open Sans", sans-serif; color: #fff; }
.active::before { content: ""; position: absolute; left: 3px; top: 4px; width: 36px; height: 38px; border-radius: 4px; background: rgba(255,255,255,.55); box-shadow: 2px 0 0 #dfeae3, 3px 0 0 #b9c7bf; }
.active svg { position: relative; }
.app > i { position: absolute; left: 14px; bottom: 4px; width: 16px; height: 3px; border-radius: 2px; background: #0078d4; }
.run > i { left: 19px; width: 6px; background: #858a87; }
.tray { flex: 1; display: flex; align-items: center; height: 46px; padding-right: 19px; justify-content: flex-end; }
.tray svg { fill: none; stroke: #222; stroke-width: 1.200; }
.up { width: 12px; height: 8px; margin-right: 15px; }
.upd { width: 18px; height: 18px; margin-right: 16px; }
.orange { fill: #f7941d; stroke: none; }
.blk, .blk2 { fill: #222; }
.lang { width: 26px; text-align: center; line-height: 16px; margin-right: 18px; font-size: 12px; letter-spacing: -.2px; padding-bottom: 0; }
.lang span, .clock span { display: block; }
.wifi { width: 16px; height: 13px; margin-right: 7px; }
.vol { width: 17px; height: 14px; margin-right: 7px; }
.batt { width: 16px; height: 14px; margin-right: 16px; }
.clock { width: 64px; text-align: right; line-height: 16px; white-space: nowrap; font-size: 11.500px; padding-bottom: 2px; }
```
